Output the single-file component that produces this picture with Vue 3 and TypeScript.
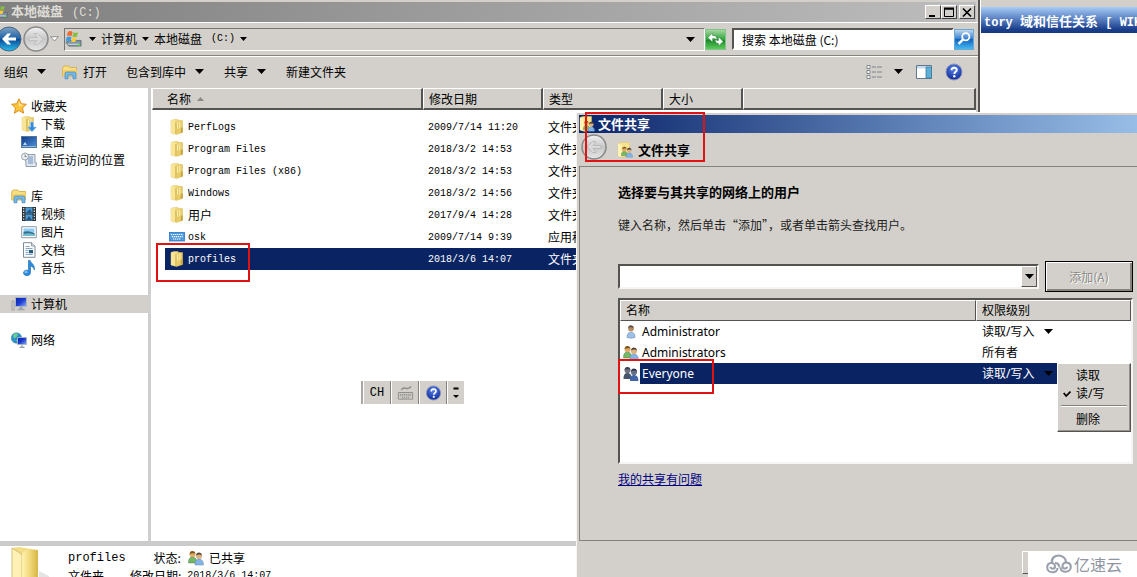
<script setup lang="ts">
import { ref } from 'vue'

interface NavItem { icon: string; label: string; child?: boolean; active?: boolean }
interface FileRow { icon: string; name: string; cjk?: boolean; date: string; kind: string; selected?: boolean }
interface UserRow { icon: string; name: string; level: string; menu?: boolean; selected?: boolean }

const navGroups: NavItem[][] = [
  [
    { icon: 'star', label: '收藏夹' },
    { icon: 'download', label: '下载', child: true },
    { icon: 'desktop', label: '桌面', child: true },
    { icon: 'recent', label: '最近访问的位置', child: true },
  ],
  [
    { icon: 'library', label: '库' },
    { icon: 'video', label: '视频', child: true },
    { icon: 'picture', label: '图片', child: true },
    { icon: 'document', label: '文档', child: true },
    { icon: 'music', label: '音乐', child: true },
  ],
  [{ icon: 'computer', label: '计算机', active: true }],
  [{ icon: 'network', label: '网络' }],
]

const files: FileRow[] = [
  { icon: 'folder', name: 'PerfLogs', date: '2009/7/14 11:20', kind: '文件夹' },
  { icon: 'folder', name: 'Program Files', date: '2018/3/2 14:53', kind: '文件夹' },
  { icon: 'folder', name: 'Program Files (x86)', date: '2018/3/2 14:53', kind: '文件夹' },
  { icon: 'folder', name: 'Windows', date: '2018/3/2 14:56', kind: '文件夹' },
  { icon: 'folder', name: '用户', cjk: true, date: '2017/9/4 14:28', kind: '文件夹' },
  { icon: 'osk', name: 'osk', date: '2009/7/14 9:39', kind: '应用程序' },
  { icon: 'folder', name: 'profiles', date: '2018/3/6 14:07', kind: '文件夹', selected: true },
]

const users: UserRow[] = [
  { icon: 'user', name: 'Administrator', level: '读取/写入', menu: true },
  { icon: 'users', name: 'Administrators', level: '所有者' },
  { icon: 'users-dim', name: 'Everyone', level: '读取/写入', menu: true, selected: true },
]

const search = ref('搜索 本地磁盘 (C:)')
const account = ref('')
</script>

<template>
  <main class="screen">
    <svg class="defs" aria-hidden="true">
      <defs>
        <linearGradient id="gold" x1="0" x2="1"><stop offset="0" stop-color="#fff3b4" /><stop offset=".5" stop-color="#f0d878" /><stop offset="1" stop-color="#d9b445" /></linearGradient>
        <linearGradient id="blueball" x1="0" y1="0" x2="0" y2="1"><stop offset="0" stop-color="#7fa3c4" /><stop offset=".48" stop-color="#1e62a6" /><stop offset=".52" stop-color="#0c4c98" /><stop offset="1" stop-color="#29c0f0" /></linearGradient>
        <linearGradient id="grayball" x1="0" y1="0" x2="0" y2="1"><stop offset="0" stop-color="#f2f2f2" /><stop offset=".5" stop-color="#c6c6c6" /><stop offset="1" stop-color="#e6e6e6" /></linearGradient>
        <linearGradient id="scr" x1="0" y1="0" x2="1" y2="1"><stop offset="0" stop-color="#0a22a8" /><stop offset=".5" stop-color="#1c3cd0" /><stop offset="1" stop-color="#8fb0f4" /></linearGradient>
        <linearGradient id="desk" x1="0" y1="0" x2="1" y2="1"><stop offset="0" stop-color="#123a86" /><stop offset="1" stop-color="#4d93d8" /></linearGradient>
        <radialGradient id="help" cx=".5" cy=".3" r=".7"><stop offset="0" stop-color="#5b84e8" /><stop offset="1" stop-color="#0f2b9c" /></radialGradient>
      </defs>
      <symbol id="i-star" viewBox="0 0 16 16"><path d="M8 .8l2.200 4.900 5.200.6-3.900 3.600 1.100 5.300L8 12.500l-4.600 2.700 1.100-5.300L.6 6.300l5.200-.6z" fill="#fcc43a" stroke="#d9861a" stroke-width=".9" /><path d="M8 3l1.500 3.600 3 .4-4.500 1.500z" fill="#ffeaa0" /></symbol>
      <symbol id="i-folder" viewBox="0 0 16 16"><path d="M2 1.500L5 .5h4l1 1h3.500v12l-6 2-5.500-1.500z" fill="url(#gold)" stroke="#dcc26c" stroke-width=".5" /><path d="M2 1.500l4.500 1.800v12L2 13.800z" fill="#f8e596" /><path d="M7.200 3.500V15l6-1.700V1.800z" fill="#e8cc6a" /><path d="M8.500 3.500v6M10.800 2.500v7" stroke="#fff4be" stroke-width=".9" /><path d="M6.800 3v12" stroke="#cfa93f" stroke-width=".8" /><path d="M11.800 8.500h2v4.800l-2 .6z" fill="#c9a53e" /></symbol>
      <symbol id="i-download" viewBox="0 0 16 16"><use href="#i-folder" x="-1" width="16" height="16" /><path d="M9.500 6h3v5h3L11 15.800 6.500 11h3z" fill="#2d8be0" stroke="#a6d0f6" stroke-width=".7" /></symbol>
      <symbol id="i-desktop" viewBox="0 0 16 16"><rect x=".5" y="2.500" width="15" height="11" fill="url(#desk)" stroke="#54779e" /><path d="M1 12.500h14" stroke="#8db9dd" /><path d="M2 11l2-3 2 3z" fill="#b9ddf4" /></symbol>
      <symbol id="i-recent" viewBox="0 0 16 16"><path d="M4.500 2.500H14v8.500h2l-1 3.500H5z" fill="#dfe6ee" stroke="#8795a6" stroke-width=".9" /><path d="M7 5h5M7 7h5M7 9h5M7 11h5" stroke="#6f92bd" /><circle cx="4" cy="4.500" r="3.500" fill="#eef1f3" stroke="#929aa2" stroke-width=".9" /><path d="M4 2.500v2.200h1.700" stroke="#566" fill="none" stroke-width=".8" /></symbol>
      <symbol id="i-library" viewBox="0 0 16 16"><path d="M.7 3.500L2 2h5l1 1.500h6.500V12H.7z" fill="#f8de83" stroke="#d1a93c" stroke-width=".8" /><path d="M1 6h14v6H1z" fill="#f5cf63" /><path d="M3 14.800V9.500Q3 8 4.500 8h8Q14 8 14 9.500v5.300h-3V11H6v3.800z" fill="#75b9e8" stroke="#3d86be" stroke-width=".7" /></symbol>
      <symbol id="i-video" viewBox="0 0 16 16"><path d="M1 1h14v14H1z" fill="#27323b" /><path d="M4.500 1.500h7v6h-7zM4.500 8.500h7v6h-7z" fill="#4d9bd0" /><path d="M5 7l4-4 2 4zM5 14l3-4 3 4z" fill="#235685" /><path d="M2.700 2v12M13.300 2v12" stroke="#eee" stroke-width="1.200" stroke-dasharray="1.300 1.300" /></symbol>
      <symbol id="i-picture" viewBox="0 0 16 16"><path d="M.7 2.700h14.600v11H.7z" fill="#fff" stroke="#8b9ba7" /><path d="M2.500 4.500h11v4h-11z" fill="#8fcaf0" /><path d="M2.500 8q4-2 11 1v3h-11z" fill="#32708d" /><path d="M2.500 10q5-1.500 11 .5v1.500h-11z" fill="#70b9cf" /></symbol>
      <symbol id="i-document" viewBox="0 0 16 16"><path d="M2.500.7h8L14 4v11.300H2.500z" fill="#fcfdff" stroke="#7e8b98" /><path d="M10.500.7V4H14" fill="#d6dfe8" stroke="#7e8b98" stroke-width=".8" /><path d="M4.500 4.500h4M4.500 6.500h7M4.500 12.500h7M4.500 10.500h3M4.500 8.500h3" stroke="#759ac0" stroke-width=".9" /><path d="M8 8h4v3.300H8z" fill="#285d78" /></symbol>
      <symbol id="i-music" viewBox="0 0 16 16"><path d="M7.500.5h1.800c.3 3 5 3.600 4 9.500-.4-2.500-2-3.600-3.800-4v6.800c0 4-7.500 3.600-7-.2.300-2.300 3-3 5-2z" fill="#2a8be0" stroke="#1765aa" stroke-width=".6" /><ellipse cx="5" cy="12" rx="1.700" ry="1" fill="#80c6f8" /></symbol>
      <symbol id="i-computer" viewBox="0 0 16 16"><path d="M1 5h2v9H1z" fill="#d8dadc" stroke="#8b8d8f" stroke-width=".7" /><path d="M4.500 1.500h11v9h-11z" fill="url(#scr)" stroke="#a9b5c4" /><path d="M8.500 11h3v2h-3z" fill="#99a3ae" /><path d="M6.500 13.500h7" stroke="#9aa5b0" stroke-width="1.500" /></symbol>
      <symbol id="i-network" viewBox="0 0 16 16"><circle cx="5.500" cy="6" r="5.200" fill="#2c92c9" stroke="#357a92" stroke-width=".5" /><path d="M2 3.500Q5 0 7 2L5.500 5 3 6.500zM5 8l3-1-1 4z" fill="#6dd08c" /><path d="M6.500 5.500h9v7h-9z" fill="url(#scr)" stroke="#a9b5c4" stroke-width=".9" /><path d="M11 13v2M8.500 15.300h5" stroke="#8f9ba6" stroke-width="1.200" /></symbol>
      <symbol id="i-osk" viewBox="0 0 16 16"><rect x=".5" y="3.500" width="15" height="8.500" fill="#4d9ade" stroke="#2a77c2" stroke-width=".8" /><path d="M2 5.500h12M2.800 7.700h11M4 10h8" stroke="#fff" stroke-width="1.200" stroke-dasharray="1.300 .7" /></symbol>
      <symbol id="i-user" viewBox="0 0 16 16"><path d="M4 13.500c-.3-3.500 1.500-5.300 4-5.300s4.300 1.800 4 5.300q-4 1.500-8 0z" fill="#9fbfe6" stroke="#7292b8" stroke-width=".6" /><circle cx="8" cy="4.600" r="2.900" fill="#b68c62" /><path d="M5.200 4Q5.400 1.200 8 1.300T10.800 4Q8 2.700 5.200 4z" fill="#5d5048" /></symbol>
      <symbol id="i-users" viewBox="0 0 16 16"><path d="M.6 13c-.3-4 1.300-6 3.800-6s4.500 2 4.200 6z" fill="#75b764" stroke="#4c8545" stroke-width=".5" /><circle cx="4.500" cy="4.300" r="3" fill="#dfaa67" /><path d="M1.600 4Q2 .8 4.600 1t2.900 2.600Q5 2.500 1.600 4z" fill="#7c5620" /><path d="M7 15c-.3-4 1.600-6 4-6s4.600 2 4.400 6z" fill="#83b4e6" stroke="#5e87b0" stroke-width=".5" /><circle cx="11" cy="6" r="3.100" fill="#dcb283" /><path d="M8 5.500Q8.500 2.300 11 2.400t3.100 3Q11 3.800 8 5.500z" fill="#554435" /></symbol>
      <symbol id="i-users-dim" viewBox="0 0 16 16"><path d="M.6 13c-.3-4 1.300-6 3.800-6s4.500 2 4.200 6z" fill="#47566b" /><circle cx="4.500" cy="4.300" r="3" fill="#6f7381" /><path d="M1.600 4Q2 .8 4.600 1t2.900 2.600Q5 2.500 1.600 4z" fill="#3e4250" /><path d="M7 15c-.3-4 1.600-6 4-6s4.600 2 4.400 6z" fill="#4266a8" /><circle cx="11" cy="6" r="3.100" fill="#687087" /><path d="M8 5.500Q8.500 2.300 11 2.400t3.100 3Q11 3.800 8 5.500z" fill="#2b3248" /></symbol>
      <symbol id="i-share" viewBox="0 0 16 16"><path d="M1 1.500L4 .5h8.500v13l-7 2L1 14z" fill="#f8e48c" stroke="#dcc26c" stroke-width=".5" /><path d="M1 1.500l3.500 1.500v12L1 14z" fill="#fff3b8" /><use href="#i-users" x="4" y="4" width="12" height="12" /></symbol>
      <symbol id="i-drive" viewBox="0 0 18 20"><path d="M1 13l4-2h12v6H4z" fill="#8094a2" stroke="#56646e" stroke-width=".8" /><path d="M3 15h12" stroke="#dce8ef" /><path d="M13 15.500h3" stroke="#6be34d" stroke-width="1.500" /><path d="M3 2q3-2 5 0L7 6.500Q5 5 2 6.300z" fill="#ee6a32" /><path d="M9 2.200q2.500 1.500 5 0l-1.300 4.500q-2.700 1.200-4.800 0z" fill="#87bf44" /><path d="M1.800 7.500q3-1.500 5 0L5.600 12Q3 10.500.6 12z" fill="#3d9be0" /><path d="M7.700 7.700q2.300 1.400 4.800 0L11.200 12q-2.500 1.300-4.700 0z" fill="#f8ca3c" /></symbol>
      <symbol id="i-tri" viewBox="0 0 9 5"><path d="M0 0h9L4.500 5z" fill="currentColor" /></symbol>
      <symbol id="i-help" viewBox="0 0 18 18"><circle cx="9" cy="9" r="8" fill="url(#help)" stroke="#8c95b4" /><path d="M6.500 7.200c0-3.400 5.300-3.200 5.300-.3 0 1.800-2.500 2-2.500 4.100" fill="none" stroke="#fff" stroke-width="1.900" /><circle cx="9.300" cy="13.300" r="1.200" fill="#fff" /></symbol>
    </svg>

    <section class="backdrop">
      <div class="backdrop-title"><span class="lat12">tory </span>域和信任关系<span class="lat12"> [ WIK</span></div>
    </section>

    <section class="explorer">
      <header class="titlebar">
        <svg class="title-drive"><use href="#i-drive" /></svg>
        <h1>本地磁盘<span class="paren">(C:)</span></h1>
        <div class="caption">
          <button aria-label="最小化"><svg viewBox="0 0 12 11"><path d="M2 9h6" stroke="#000" stroke-width="2" /></svg></button>
          <button aria-label="最大化"><svg viewBox="0 0 12 11"><path d="M1.500 2h9M1.500 1v8.500h9V1" fill="none" stroke="#000" stroke-width="1" /><path d="M1 1.500h10" stroke="#000" stroke-width="2" /></svg></button>
          <button class="close" aria-label="关闭"><svg viewBox="0 0 12 11"><path d="M2 1.500l8 8M10 1.500l-8 8" stroke="#000" stroke-width="1.700" /></svg></button>
        </div>
      </header>

      <nav class="navbar">
        <button class="round first" aria-label="后退"><svg viewBox="0 0 26 26"><circle cx="13" cy="13" r="12" fill="url(#blueball)" stroke="#44657f" /><path d="M20 11.500h-8l3-4h-3.500L6 13l5.500 5.500H15l-3-4h8z" fill="#fff" /></svg></button>
        <button class="round" aria-label="前进"><svg viewBox="0 0 26 26"><circle cx="13" cy="13" r="12" fill="url(#grayball)" stroke="#888" stroke-width="1.500" /><path d="M6 11.500h8l-3-4h3.500L20 13l-5.500 5.500H11l3-4H6z" fill="#d9d9d9" stroke="#b3b3b3" stroke-width=".6" /></svg></button>
        <button class="history" aria-label="最近位置"><svg viewBox="0 0 9 6"><path d="M.7.700h7.600L4.500 5z" fill="#fff" stroke="#777" stroke-width=".8" /></svg></button>
        <div class="address">
          <svg class="drive"><use href="#i-drive" /></svg>
          <svg class="tri small"><use href="#i-tri" /></svg>
          <button>计算机</button>
          <svg class="tri small"><use href="#i-tri" /></svg>
          <button>本地磁盘<span class="paren">(C:)</span></button>
          <svg class="tri small"><use href="#i-tri" /></svg>
          <button class="drop" aria-label="展开地址"><svg class="tri"><use href="#i-tri" /></svg></button>
        </div>
        <button class="refresh" aria-label="刷新"><svg viewBox="0 0 20 20"><path d="M2 8l5-5v3h3l2 4-4-1H7v4z" fill="#fff" stroke="#197326" stroke-width=".5" /><path d="M18 12l-5 5v-3h-2l-2-4 3 1h1V7z" fill="#fff" stroke="#197326" stroke-width=".5" /></svg></button>
        <input v-model="search" class="search" aria-label="搜索" />
        <button class="find" aria-label="开始搜索"><svg viewBox="0 0 20 20"><circle cx="12" cy="7.500" r="4" fill="none" stroke="#fff" stroke-width="2" /><path d="M9 10.500L4 15.500" stroke="#fff" stroke-width="2.600" /></svg></button>
      </nav>

      <div class="toolbar">
        <button>组织<svg class="tri"><use href="#i-tri" /></svg></button>
        <button class="open"><svg class="i16"><use href="#i-library" /></svg>打开</button>
        <button>包含到库中<svg class="tri"><use href="#i-tri" /></svg></button>
        <button>共享<svg class="tri"><use href="#i-tri" /></svg></button>
        <button>新建文件夹</button>
        <div class="tools-right">
          <button aria-label="更改视图"><svg class="i16" viewBox="0 0 16 16"><path d="M1 1.500h3v3H1zM1 6.500h3v3H1zM1 11.500h3v3H1z" fill="#fff" stroke="#68727c" stroke-width=".8" /><path d="M6 3h4M11 3h5M6 8h4M11 8h5M6 13h4M11 13h5" stroke="#7c848c" /></svg><svg class="tri"><use href="#i-tri" /></svg></button>
          <button aria-label="预览窗格"><svg class="i16" viewBox="0 0 16 16"><path d="M.5 1.500h15v13H.5z" fill="#fff" stroke="#5e7690" /><path d="M1 2h14v2.500H1z" fill="#c4dbee" /><path d="M10 3h5.500v11H10z" fill="#5cafd6" stroke="#41799b" stroke-width=".8" /></svg></button>
          <button aria-label="帮助"><svg class="i18"><use href="#i-help" /></svg></button>
        </div>
      </div>

      <div class="content">
        <aside class="sidebar">
          <ul v-for="(group, g) in navGroups" :key="g">
            <li v-for="item in group" :key="item.label">
              <a href="#" :class="{ child: item.child, active: item.active }"><svg class="i16"><use :href="'#i-' + item.icon" /></svg>{{ item.label }}</a>
            </li>
          </ul>
        </aside>
        <div class="files">
          <table>
            <colgroup><col class="c-name" /><col class="c-date" /><col class="c-kind" /><col class="c-size" /><col /></colgroup>
            <thead>
              <tr><th class="name">名称<svg class="sort" viewBox="0 0 9 5"><path d="M0 5h9L4.500 0z" fill="#8b8984" /></svg></th><th>修改日期</th><th>类型</th><th>大小</th><th></th></tr>
            </thead>
            <tbody>
              <tr v-for="f in files" :key="f.name" :class="{ selected: f.selected }">
                <td class="name"><span class="file"><svg class="i16"><use :href="'#i-' + f.icon" /></svg><span :class="{ lat: !f.cjk }">{{ f.name }}</span></span></td>
                <td class="lat">{{ f.date }}</td><td>{{ f.kind }}</td><td></td><td></td>
              </tr>
            </tbody>
          </table>
        </div>
      </div>

      <footer class="details">
        <svg class="big-folder" viewBox="0 0 44 40"><path d="M5 2l7-1 19 3v36H5z" fill="#f2dc85" /><path d="M5 2l8 5q3 2 2 6v27H5z" fill="#fff0b5" stroke="#cdb366" stroke-width=".8" /><path d="M15 10q0-5 6-6l10 0v36H15z" fill="url(#gold)" /><path d="M32 25l10 5v10H32z" fill="#e4e4e4" /></svg>
        <div class="detail-text">
          <p><span class="lat12">profiles</span><span class="label">状态:</span><svg class="i16"><use href="#i-users" /></svg><span>已共享</span></p>
          <p><span class="type">文件夹</span><span>修改日期:</span><span class="lat">2018/3/6 14:07</span></p>
        </div>
      </footer>
    </section>

    <div class="langbar">
      <button class="lat12">CH</button>
      <button aria-label="软键盘"><svg viewBox="0 0 18 16"><path d="M1.500 7.500h15v7h-15z" fill="none" stroke="#8d8b86" /><path d="M3 9.500h12M3 11h12M5 13h8" stroke="#8d8b86" stroke-dasharray="1.500 .7" /><path d="M5 5q0-3 4-2t6-2" fill="none" stroke="#8d8b86" stroke-width="1.500" /></svg></button>
      <button aria-label="帮助"><svg><use href="#i-help" /></svg></button>
      <button class="opts" aria-label="选项"><svg viewBox="0 0 8 14"><path d="M1.500 2.500h5" stroke="#000" stroke-width="2" /><path d="M1 9h6L4 12z" /></svg></button>
    </div>

    <section class="dialog" role="dialog" aria-label="文件共享">
      <header class="dlg-title"><svg class="i16"><use href="#i-share" /></svg>文件共享</header>
      <div class="dlg-nav">
        <button class="round" aria-label="返回"><svg viewBox="0 0 26 26"><circle cx="13" cy="13" r="12" fill="url(#grayball)" stroke="#888" stroke-width="1.500" /><path d="M20 11.500h-8l3-4h-3.500L6 13l5.500 5.500H15l-3-4h8z" fill="#d9d9d9" stroke="#aaa" stroke-width=".6" /></svg></button>
        <svg class="i16"><use href="#i-share" /></svg><strong>文件共享</strong>
      </div>
      <div class="dlg-body">
        <h2>选择要与其共享的网络上的用户</h2>
        <p class="hint">键入名称，然后单击“添加”，或者单击箭头查找用户。</p>
        <div class="add-row">
          <div class="combo"><input v-model="account" aria-label="用户名称" /><button aria-label="查找用户"><svg class="tri"><use href="#i-tri" /></svg></button></div>
          <button class="add" disabled>添加(A)</button>
        </div>
        <div class="list">
          <table>
            <colgroup><col /><col class="c-level" /></colgroup>
            <thead><tr><th>名称</th><th>权限级别</th></tr></thead>
            <tbody>
              <tr v-for="u in users" :key="u.name" :class="{ selected: u.selected }">
                <td class="uname"><span class="file"><svg class="i16"><use :href="'#i-' + u.icon" /></svg>{{ u.name }}</span></td>
                <td><button v-if="u.menu" class="level">{{ u.level }}<svg class="tri"><use href="#i-tri" /></svg></button><template v-else>{{ u.level }}</template></td>
              </tr>
            </tbody>
          </table>
          <div class="menu" role="menu">
            <button role="menuitemradio" aria-checked="false">读取</button>
            <button role="menuitemradio" aria-checked="true"><svg viewBox="0 0 8 8"><path d="M.7 3l2.500 3L7.500 1.500" fill="none" stroke="#000" stroke-width="1.800" /></svg>读/写</button>
            <hr />
            <button role="menuitem">删除</button>
          </div>
        </div>
        <a class="trouble" href="#">我的共享有问题</a>
      </div>
      <footer class="dlg-foot"><button class="share" aria-label="共享"></button></footer>
    </section>

    <div class="mark mark-file"></div>
    <div class="mark mark-title"></div>
    <div class="mark mark-user"></div>

    <div class="brand">
      <svg viewBox="0 0 26 20"><path d="M6 9C5 4 9 1.500 12.500 1.500S20 4 20 8" fill="none" stroke="#9aa0ac" stroke-width="2.200" /><path d="M11.500 14c0 6-10.300 5.500-10.300-.5C1.200 8 9 7.500 9 12.500c0 3-4.500 2.800-4.500.3M14.500 13.500c0 6 10.300 5.500 10.300-.5 0-5.500-8.300-6-8.300-.8 0 3 4.500 3 4.500.5" fill="none" stroke="#9aa0ac" stroke-width="2.100" /><path d="M9 9q4 0 4.500 4.500" fill="none" stroke="#9aa0ac" stroke-width="2" /></svg>
      <span>亿速云</span>
    </div>
  </main>
</template>

<style>
body { overflow: hidden; }
</style>

<style scoped>
* { box-sizing: border-box; }
.screen {
  --face: #d3d0cb;
  --navy: #0a2463;
  position: relative;
  height: 100vh;
  overflow: hidden;
  background: #fff;
  color: #000;
  font: 12px/18px "Noto Sans CJK SC", sans-serif;
}
.defs { position: absolute; width: 0; height: 0; }
button { border: 0; padding: 0; margin: 0; background: none; font: inherit; color: inherit; display: flex; align-items: center; justify-content: center; }
svg { flex: none; display: block; }
h1, h2, p, ul { margin: 0; padding: 0; }
ul { list-style: none; }
.i16 { width: 16px; height: 16px; }
.i18 { width: 18px; height: 18px; }
.tri { width: 9px; height: 5px; }
.tri.small { width: 7px; height: 4px; }
.lat { font-family: "Liberation Mono", monospace; font-size: 10px; }
.lat12 { font-family: "Liberation Mono", monospace; font-size: 12px; }
.paren { font-family: "Liberation Mono", monospace; font-size: 10px; margin-left: 9px; }

.backdrop { position: absolute; left: 981px; right: 0; top: 0; height: 112px; border-top: 7px solid var(--face); background: #fff; overflow: hidden; }
.backdrop-title { height: 26px; padding-left: 3px; background: linear-gradient(#a8ccf4, #6c92d0 35%, #1b3f8c 85%, #16397f); color: #fff; font-size: 13px; line-height: 27px; font-weight: bold; white-space: pre; }

.explorer { position: absolute; left: 0; top: 0; width: 980px; height: 100vh; display: flex; flex-direction: column; background: var(--face); border-right: 2px solid #55534f; }
.titlebar { display: flex; align-items: center; height: 20px; margin: 2px 2px 0 0; background: linear-gradient(90deg, #808080, #bdbdbd); color: #dedcd6; overflow: hidden; }
.title-drive { width: 14px; height: 16px; margin-left: -6px; }
.titlebar h1 { flex: 1; margin-left: 3px; font-size: 13px; line-height: 18px; font-weight: bold; }
.titlebar .paren { font-size: 12px; font-weight: normal; }
.caption { display: flex; margin-right: 1px; }
.caption button { width: 16px; height: 14px; background: var(--face); border: 1px solid; border-color: #fff #444 #444 #fff; }
.caption .close { margin-left: 2px; }
.caption svg { width: 12px; height: 11px; }

.navbar { display: flex; align-items: center; height: 34px; padding-right: 4px; border-bottom: 1px solid #86847f; border-top: 1px solid #fff; }
.round { width: 26px; height: 26px; }
.round svg { width: 26px; height: 26px; }
.round.first { margin: 0 1px 0 -4px; }
.history { width: 11px; margin-right: 4px; }
.history svg { width: 9px; height: 6px; }
.address { flex: 1; display: flex; align-items: center; gap: 5px; height: 23px; border: 1px solid; border-color: #77746f #fff #fff #77746f; }
.drive { width: 17px; height: 19px; margin-right: 2px; }
.drop { margin-left: auto; width: 27px; }
.refresh { width: 21px; height: 21px; margin-right: 6px; border: 1px solid #7fc486; background: linear-gradient(#a4d8a0, #2fa23a 50%, #1b8528 52%, #5ccd5b); }
.refresh svg { width: 19px; height: 19px; }
.search { width: 222px; height: 22px; border: 2px solid; border-color: #55534f #fff #fff #55534f; background: #fff; padding: 0 8px; font: inherit; line-height: 18px; color: #000; outline: 0; border-radius: 0; }
.find { width: 20px; height: 21px; border: 1px solid #6ca8d4; background: linear-gradient(#bcd6ef, #3c82d2 45%, #1364c0 50%, #43bbf2); }
.find svg { width: 18px; height: 18px; }

.toolbar { display: flex; align-items: center; gap: 20px; height: 32px; padding: 0 15px 2px 4px; border-top: 1px solid #fff; }
.toolbar button { gap: 9px; }
.toolbar .open { gap: 5px; margin: 0 -1px 0 -4px; }
.tools-right { display: flex; align-items: center; gap: 13px; margin-left: auto; }
.tools-right button:first-child { gap: 12px; }

.content { flex: 1; display: flex; min-height: 0; border-bottom: 5px solid #cbcbc9; }
.sidebar { width: 151px; background: #fff; border-right: 3px solid #cfcfcf; padding-top: 9px; }
.sidebar ul { margin-bottom: 18px; }
.sidebar a { display: flex; align-items: center; gap: 4px; height: 18px; padding-left: 11px; color: #000; text-decoration: none; white-space: nowrap; }
.sidebar a.child { padding-left: 21px; }
.sidebar a.active { background: var(--face); }
.files { flex: 1; background: #fff; padding-left: 1px; border-right: 2px solid var(--face); }
table { width: 100%; table-layout: fixed; border-collapse: separate; border-spacing: 0; }
.c-name { width: 271px; }
.c-date { width: 120px; }
.c-kind { width: 120px; }
.c-size { width: 80px; }
th { height: 22px; padding: 0 0 0 5px; text-align: left; font-weight: normal; background: var(--face); border: solid; border-width: 1px 2px 2px 1px; border-color: #fff #55534f #55534f #fff; line-height: 18px; }
th.name { padding-left: 14px; }
.sort { display: inline-block; width: 7px; height: 4px; margin: 0 0 2px 6px; vertical-align: middle; }
.files tbody::before { content: ""; display: block; height: 6px; }
td { height: 22px; padding: 0 0 0 5px; white-space: nowrap; overflow: hidden; }
td.name { padding-left: 4px; border-left: 13px solid transparent; background-clip: padding-box; }
td.lat { padding-top: 2px; }
.file { display: flex; align-items: center; gap: 3px; }
.file .lat { padding-top: 2px; }
.selected td { background-color: var(--navy); color: #fff; }

.details { height: 31px; display: flex; background: #fff; overflow: hidden; flex: none; }
.big-folder { width: 44px; height: 40px; margin-left: 7px; }
.detail-text { margin: 3px 0 0 17px; }
.detail-text p { display: flex; align-items: center; height: 18px; }
.detail-text .label { margin: 0 7px 0 28px; }
.detail-text .i16 { margin-right: 5px; }
.detail-text .type { margin-right: 26px; }
.detail-text .lat { margin-left: 6px; }

.langbar { position: absolute; left: 361px; top: 381px; display: flex; height: 23px; background: var(--face); border-left: 2px solid #aaa7a2; }
.langbar button { width: 28px; border-left: 1px solid #fff; border-right: 1px solid #85827d; }
.langbar button.opts { width: 17px; border-right: 0; }
.langbar svg { width: 17px; height: 16px; }
.langbar .opts svg { width: 8px; height: 14px; }

.dialog { position: absolute; left: 576px; right: 0; top: 112px; bottom: 0; display: flex; flex-direction: column; background: var(--face); border-left: 1px solid #f5f5f3; border-top: 1px solid #fff; padding: 2px 0 0 2px; }
.dlg-title { display: flex; align-items: center; gap: 3px; height: 18px; background: linear-gradient(90deg, #0a246a, #5f82b8 60%, #98bde6); color: #fff; font-weight: bold; font-size: 13px; }
.dlg-nav { display: flex; align-items: center; height: 33px; font-size: 13px; }
.dlg-nav .round { margin: 0 10px 6px 2px; }
.dlg-nav strong { margin-left: 5px; }
.dlg-body { flex: 1; display: flex; flex-direction: column; align-items: stretch; border: 1px solid #85827d; border-right: 0; padding: 15px 4px 0 38px; }
h2 { font-size: 13px; line-height: 20px; font-weight: bold; }
.hint { margin-top: 14px; line-height: 18px; color: #222; }
.add-row { display: flex; align-items: center; gap: 6px; margin-top: 27px; }
.combo { flex: 1; display: flex; height: 25px; background: #fff; border: 2px solid; border-color: #55534f #f6f5f3 #f6f5f3 #55534f; }
.combo input { flex: 1; min-width: 0; border: 0; outline: 0; padding: 0 4px; font: inherit; background: transparent; }
.combo button { width: 16px; background: var(--face); border: 1px solid; border-color: #fff #55534f #55534f #fff; }
.add { width: 88px; height: 31px; border: 1px solid #000; box-shadow: inset 1px 1px #fff, inset -2px -2px #85827d; color: #8b8984; text-shadow: 1px 1px #fff; }
.list { position: relative; height: 166px; margin-top: 6px; background: #fff; border: 2px solid; border-color: #55534f #f6f5f3 #f6f5f3 #55534f; font-family: "Noto Sans", "Noto Sans CJK SC", sans-serif; }
.list th { height: 21px; border-width: 1px; padding: 0 0 0 5px; }
.list td { height: 21px; line-height: 20px; padding-left: 6px; }
.list .uname { padding-left: 3px; }
.list .selected .uname { background-clip: padding-box; border-left: 20px solid transparent; padding-left: 0; }
.list .selected .uname svg { margin-left: -17px; }
.list td.uname { overflow: visible; }
.c-level { width: 155px; }
.level { gap: 10px; }
.selected .level svg { color: #000; }
.menu { position: absolute; right: 0; top: 63px; width: 74px; padding: 3px 2px 2px; background: var(--face); border: 1px solid; border-color: #fff #55534f #55534f #fff; box-shadow: inset -1px -1px #96938e; }
.menu button { position: relative; width: 100%; height: 18px; justify-content: flex-start; padding-left: 16px; }
.menu svg { position: absolute; left: 3px; width: 8px; height: 8px; }
.menu hr { margin: 2px 1px 4px; border: 0; border-top: 1px solid #85827d; border-bottom: 1px solid #fff; }
.trouble { align-self: flex-start; margin-top: 6px; color: #000080; line-height: 18px; }
.dlg-foot { flex: none; height: 36px; padding: 10px 40px 3px 0; display: flex; justify-content: flex-end; }
.share { width: 75px; border: 1px solid; border-color: #fff #55534f #55534f #fff; }

.mark { position: absolute; border: 2px solid #e01212; }
.mark-file { left: 156px; top: 243px; width: 94px; height: 39px; }
.mark-title { left: 585px; top: 112px; width: 120px; height: 50px; }
.mark-user { left: 618px; top: 359px; width: 96px; height: 35px; }

.brand { position: absolute; right: 0; bottom: 0; width: 109px; height: 26px; display: flex; align-items: center; gap: 2px; padding-left: 18px; background: #fff; color: #8f95a1; font-size: 16px; }
.brand svg { width: 26px; height: 20px; }
</style>
